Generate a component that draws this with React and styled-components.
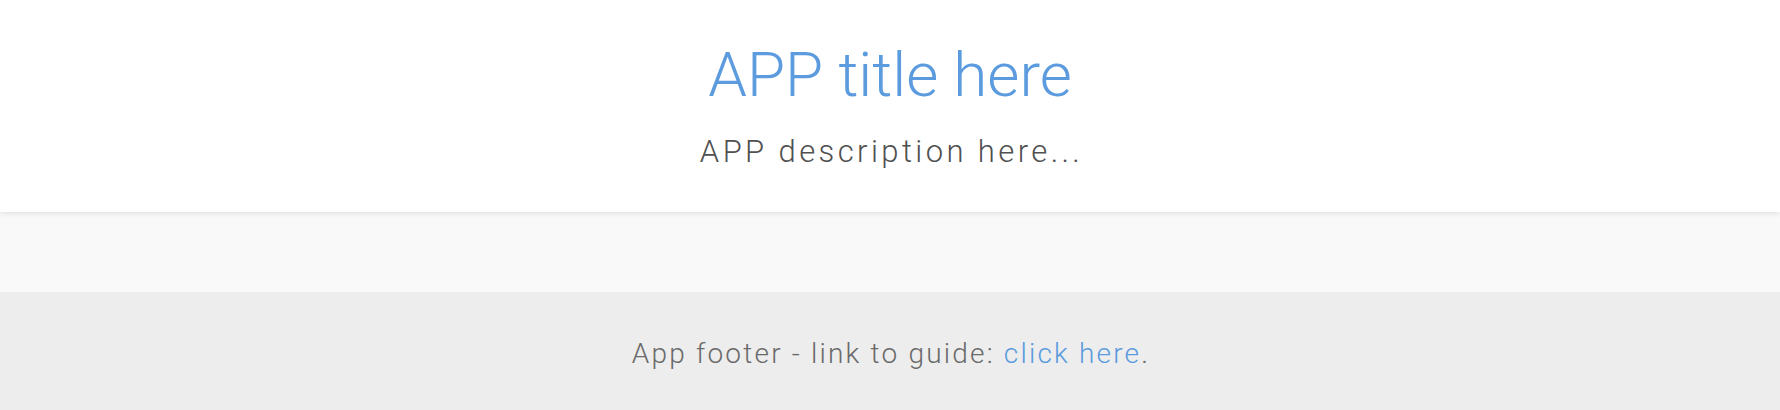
import styled, { createGlobalStyle } from "styled-components";

const GlobalStyle = createGlobalStyle`
    html, body {
        margin: 0;
        padding: 0;
        background: #ededed;
        font-family: Roboto, "Liberation Sans", sans-serif;
    }
`

const App = () => {
    return (
        <Page>
            <GlobalStyle />
            <Header>
                <Title>APP title here</Title>
                <Description>APP description here...</Description>
            </Header>
            <Main />
            <Footer>
                <FooterText>
                    App footer - link to guide: <FooterLink href="#">click here</FooterLink>.
                </FooterText>
            </Footer>
        </Page>
    )
}

export default App;

const Page = styled.div`
    display: flex;
    flex-direction: column;
    width: 100%;
    min-height: 410px;
`

const Header = styled.header`
    position: relative;
    z-index: 2;
    display: flex;
    flex-direction: column;
    align-items: center;
    height: 212px;
    box-sizing: border-box;
    padding-top: 44px;
    background-color: #ffffff;
    box-shadow: 0 1px 6px rgba(0, 0, 0, 0.12);
`

const Title = styled.h1`
    margin: 0;
    font-size: 62px;
    font-weight: 300;
    line-height: 62px;
    color: #5b9bde;
`

const Description = styled.p`
    margin: 0;
    margin-top: 30px;
    padding-left: 3px;
    font-size: 31px;
    font-weight: 300;
    line-height: 31px;
    letter-spacing: 3.4px;
    color: #505050;
`

const Main = styled.main`
    height: 80px;
    background-color: #f9f9f9;
`

const Footer = styled.footer`
    display: flex;
    justify-content: center;
    height: 118px;
    box-sizing: border-box;
    padding-top: 48px;
    background-color: #ededed;
`

const FooterText = styled.p`
    margin: 0;
    padding-left: 2px;
    font-size: 28px;
    font-weight: 300;
    line-height: 28px;
    letter-spacing: 2.2px;
    color: #6a6a6a;
`

const FooterLink = styled.a`
    color: #5b9bde;
    text-decoration: none;
`
